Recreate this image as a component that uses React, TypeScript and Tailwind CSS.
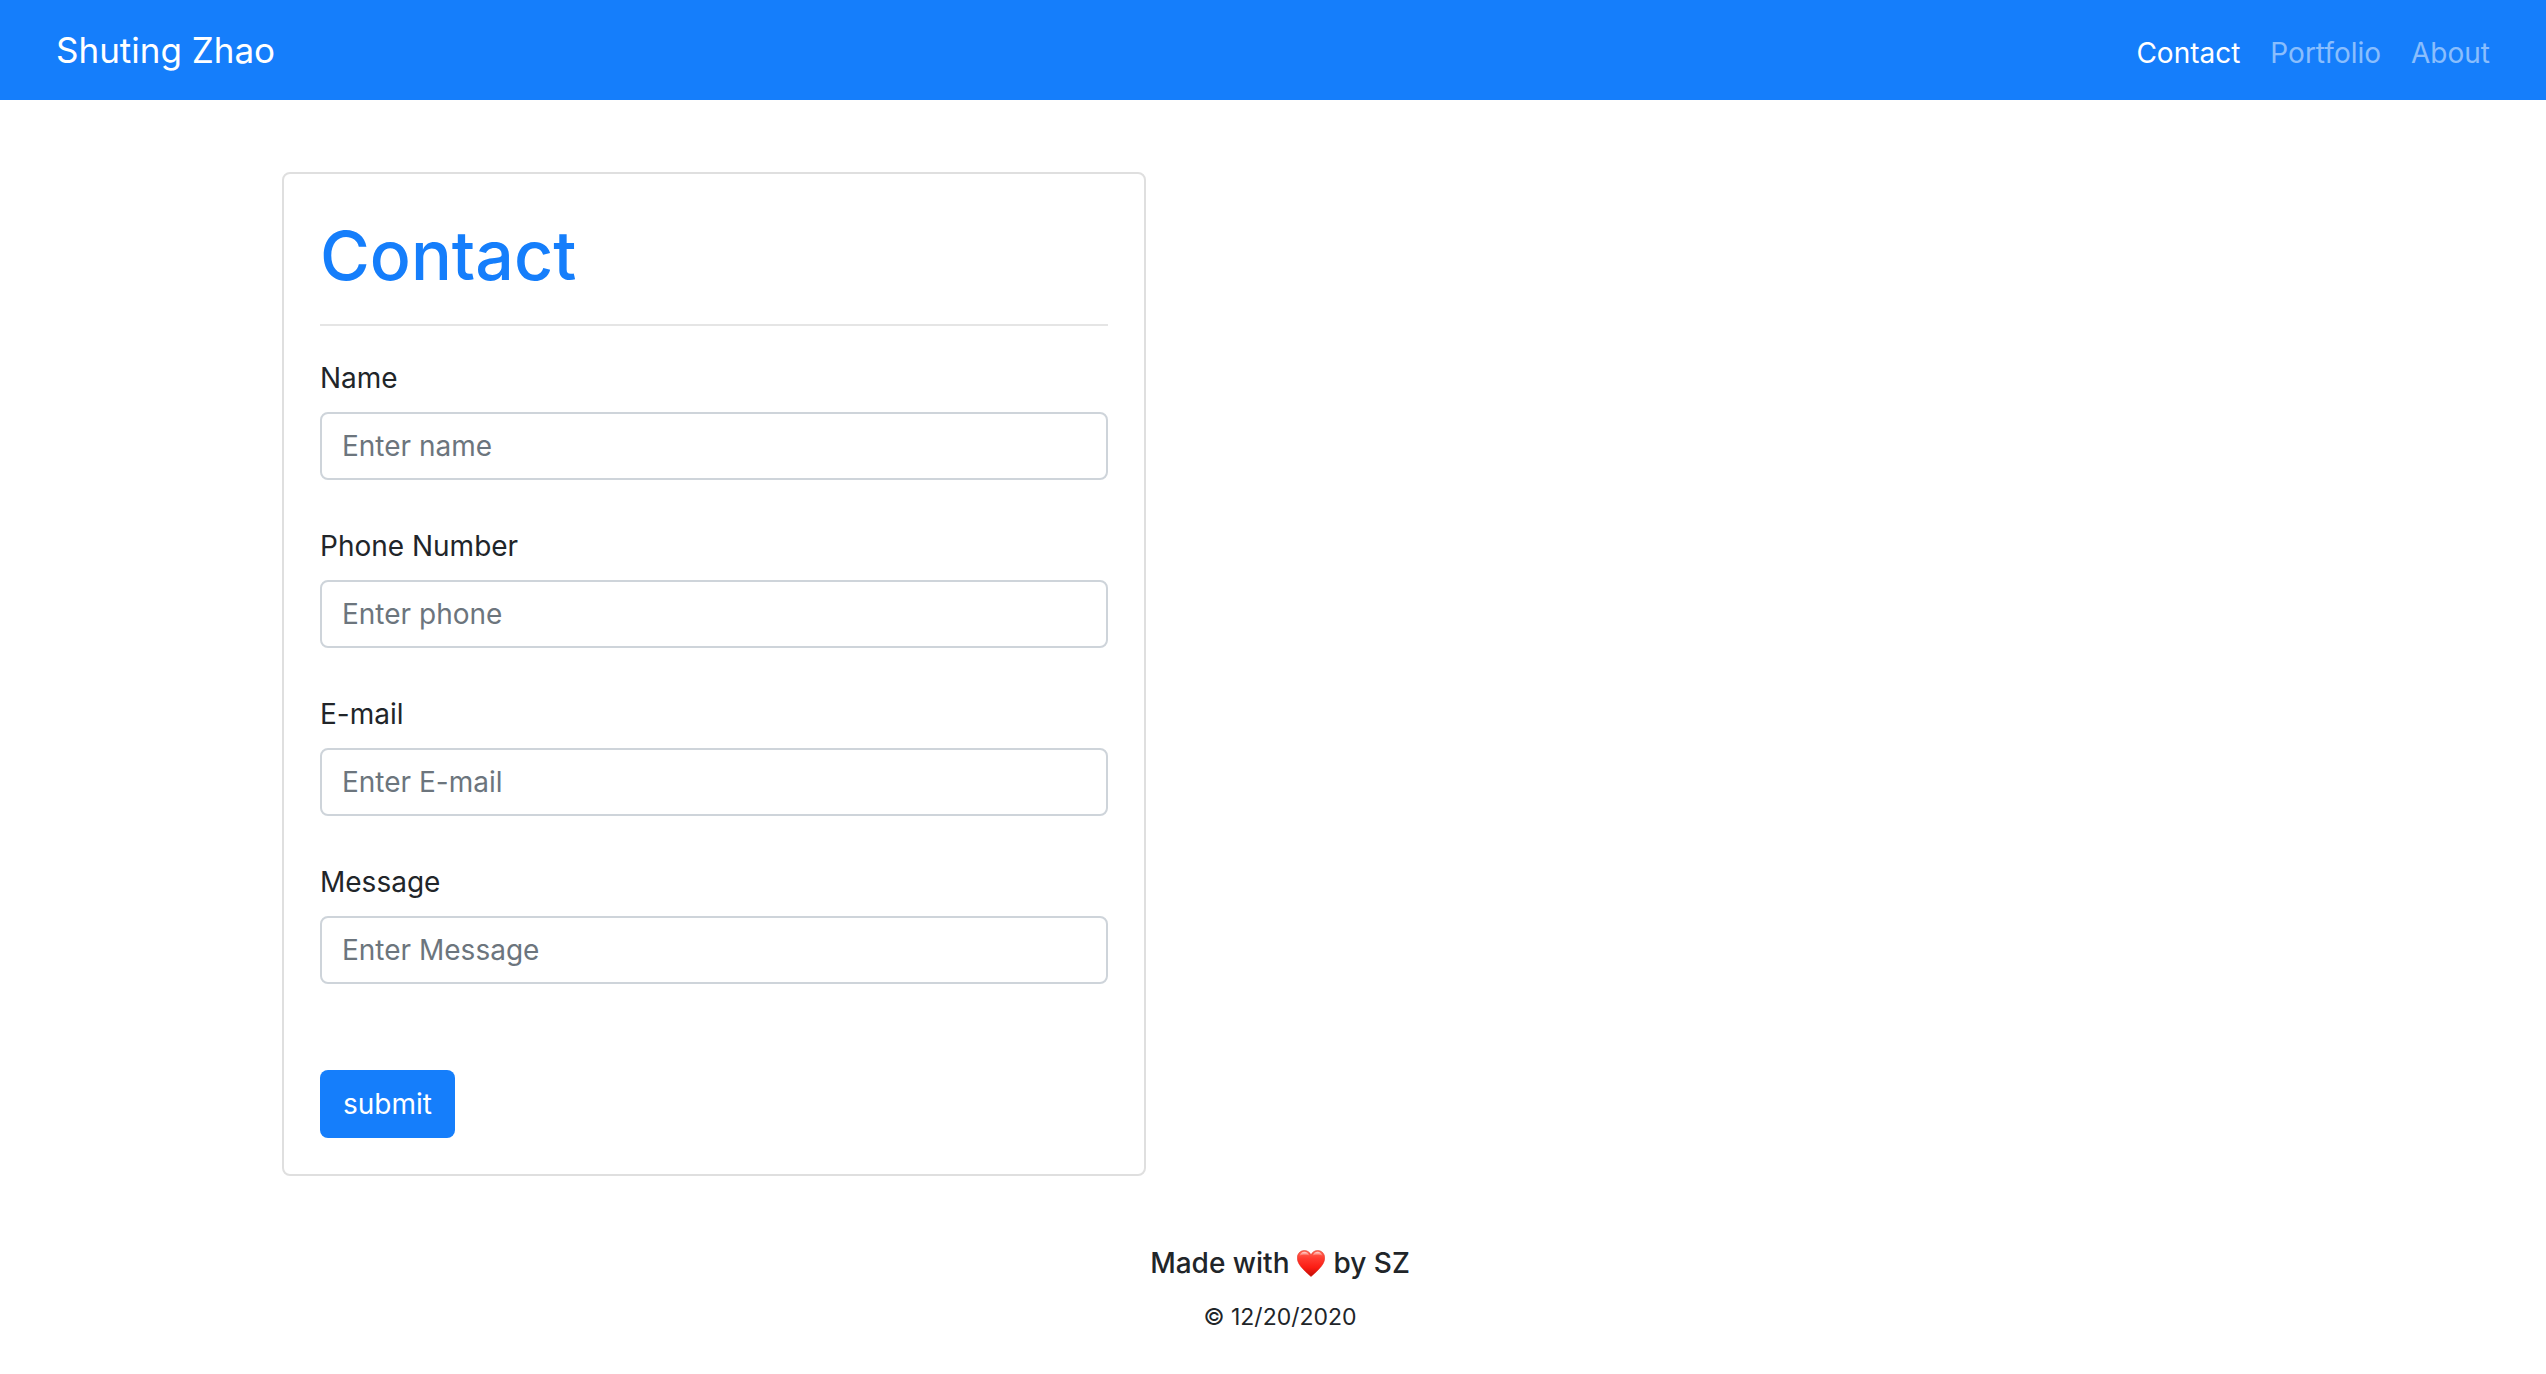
import React from 'react';

const links = [
  { label: 'Contact', active: true },
  { label: 'Portfolio', active: false },
  { label: 'About', active: false },
];

const fields = [
  { id: 'name', label: 'Name', placeholder: 'Enter name', type: 'text' },
  { id: 'phone', label: 'Phone Number', placeholder: 'Enter phone', type: 'tel' },
  { id: 'email', label: 'E-mail', placeholder: 'Enter E-mail', type: 'email' },
  { id: 'message', label: 'Message', placeholder: 'Enter Message', type: 'text' },
];

function Heart() {
  return (
    <svg viewBox="0 0 28 27" className="h-[27px] w-7" role="img" aria-label="love">
      <defs>
        <linearGradient id="heart-fill" x1="0" y1="0" x2="0" y2="1">
          <stop offset="0" stopColor="#ff6a55" />
          <stop offset="0.3" stopColor="#ff3b30" />
          <stop offset="0.65" stopColor="#fb1d14" />
          <stop offset="1" stopColor="#c00d05" />
        </linearGradient>
        <linearGradient id="heart-shine" x1="0" y1="0" x2="0" y2="1">
          <stop offset="0" stopColor="#ffffff" stopOpacity="0.75" />
          <stop offset="1" stopColor="#ffffff" stopOpacity="0" />
        </linearGradient>
      </defs>
      <path
        d="M14 26.6C12.6 25.6 9.2 22.4 6.2 19.2C2.6 15.4 0.3 12 0.3 7.9C0.3 3.6 3.4 0.5 7.3 0.5C10.4 0.5 12.9 2.2 14 5C15.1 2.2 17.6 0.5 20.7 0.5C24.6 0.5 27.7 3.6 27.7 7.9C27.7 12 25.4 15.4 21.8 19.2C18.8 22.4 15.4 25.6 14 26.6Z"
        fill="url(#heart-fill)"
        stroke="#d92a1f"
        strokeWidth="0.5"
      />
      <path d="M2.4 6.2C3.2 3.2 5 1.7 7.4 1.7C9.7 1.7 11.5 3 12.3 5.6C10.6 4.6 4.6 4.4 2.4 6.2Z" fill="url(#heart-shine)" />
      <path d="M15.7 5.6C16.5 3 18.3 1.7 20.6 1.7C23 1.7 24.8 3.2 25.6 6.2C23.4 4.4 17.4 4.6 15.7 5.6Z" fill="url(#heart-shine)" />
    </svg>
  );
}

export default function App() {
  return (
    <div className="bg-white font-[Inter,sans-serif] text-[28px] leading-[44px] text-[#212529]">
      <header className="flex flex-wrap items-baseline justify-between bg-[#157efb] px-14 pt-7 pb-[25px]">
        <a href="#home" className="text-[35px] text-white">
          Shuting Zhao
        </a>
        <nav className="flex gap-[30px]">
          {links.map((l) => (
            <a key={l.label} href={'#' + l.label.toLowerCase()} className={l.active ? 'text-white' : 'text-white/50'}>
              {l.label}
            </a>
          ))}
        </nav>
      </header>

      <div className="pl-3.5">
        <main className="mx-auto max-w-[2024px] px-3.5 pt-[72px]">
          <form
            className="max-w-[864px] rounded-lg border-2 border-[#dfdfdf] p-9"
            onSubmit={(e) => e.preventDefault()}
          >
            <h1 className="text-[68px] leading-[90px] font-medium text-[#157efb]">Contact</h1>
            <hr className="mt-6 mb-[30px] border-t-2 border-[#e5e5e5]" />
            {fields.map((f) => (
              <div key={f.id} className="mb-11">
                <label htmlFor={f.id} className="mb-3 block">
                  {f.label}
                </label>
                <input
                  id={f.id}
                  type={f.type}
                  placeholder={f.placeholder}
                  className="block h-[68px] w-full rounded-lg border-2 border-[#ced4da] bg-white px-5 placeholder:text-[#6c757d]"
                />
              </div>
            ))}
            <button type="submit" className="mt-[86px] block h-[68px] rounded-lg bg-[#157efb] px-[23px] text-white">
              submit
            </button>
          </form>
        </main>

        <footer className="pt-[65px] text-center">
          <h5 className="flex items-center justify-center gap-2 font-medium">
            <span>Made with</span>
            <Heart />
            <span>by SZ</span>
          </h5>
          <p className="mt-2.5 text-[23px]">© 12/20/2020</p>
        </footer>
      </div>
    </div>
  );
}
